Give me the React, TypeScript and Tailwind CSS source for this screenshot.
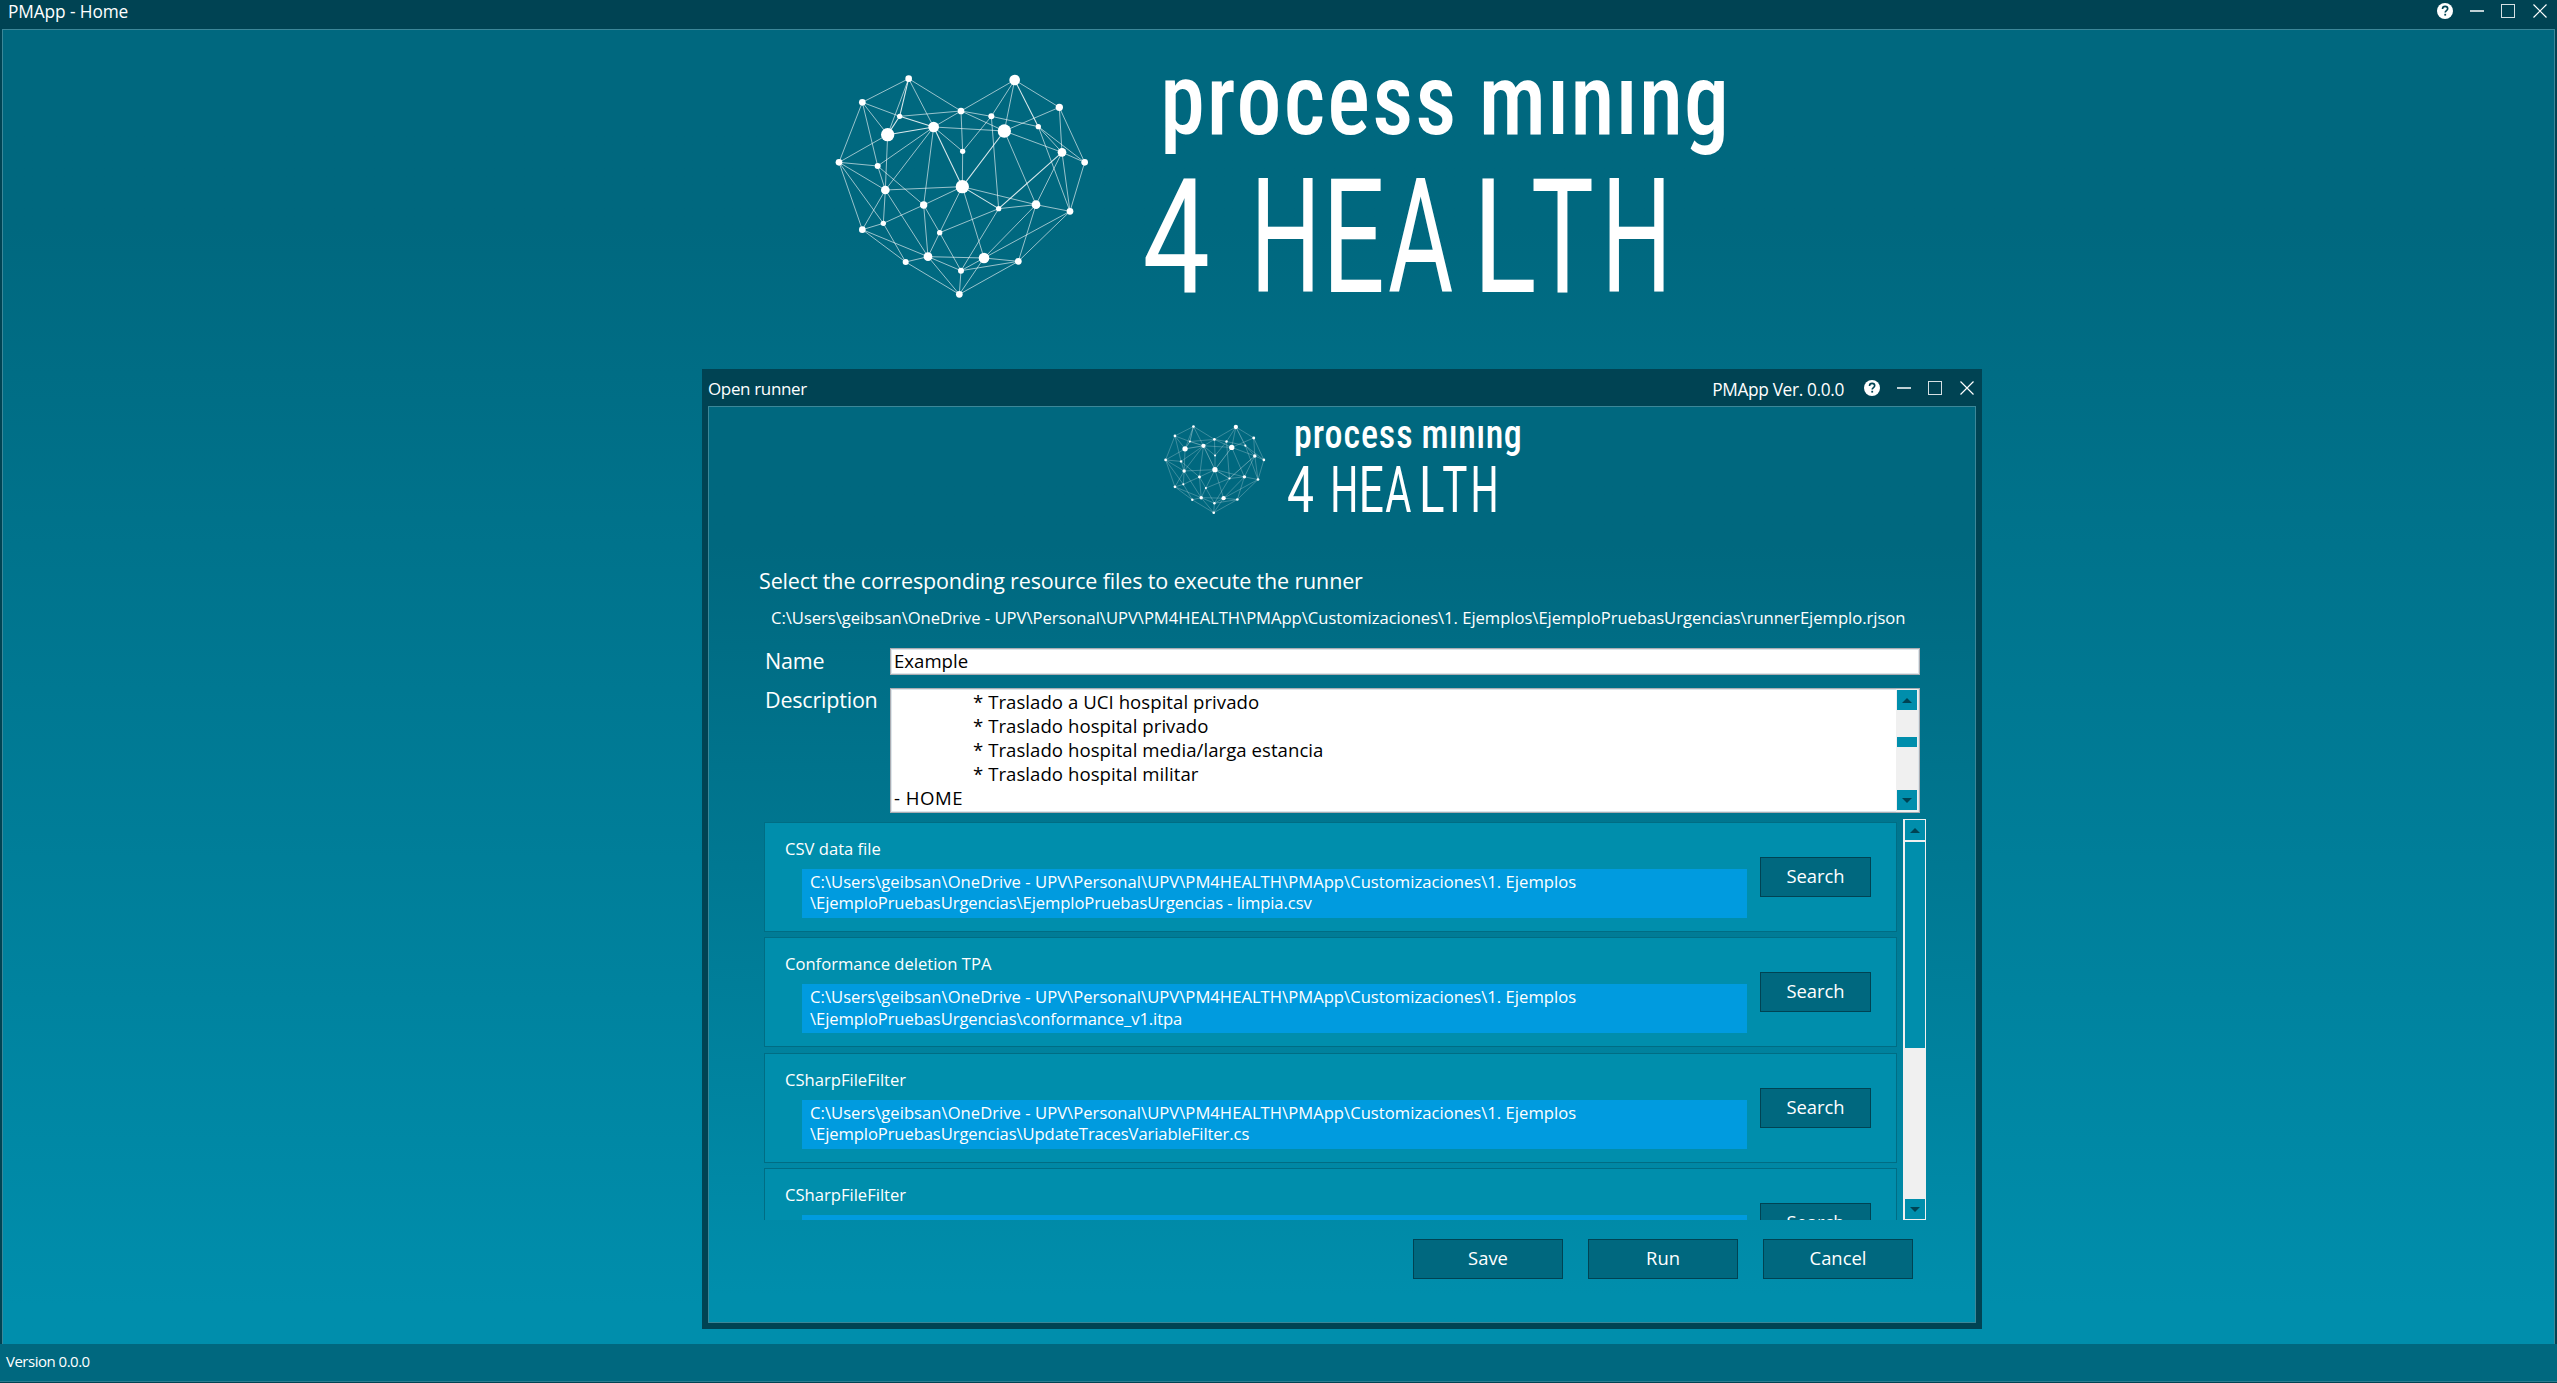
const NODES: Record<string, [number, number, number]> = {
  A: [266, 56, 10], B: [584, 60, 16], C: [127, 127, 10], D: [239, 169, 8], E: [423, 153, 10],
  F: [514, 169, 9], G: [718, 142, 11], H: [655, 200, 8], I: [341, 201, 16], J: [203, 224, 20],
  K: [553, 213, 20], L: [428, 274, 8], M: [726, 277, 13], N: [794, 307, 10], O: [57, 307, 10],
  P: [173, 318, 9], Q: [196, 390, 13], R: [427, 380, 20], S: [311, 435, 11], T: [536, 446, 8],
  U: [648, 434, 13], V: [750, 454, 10], W: [190, 490, 8], X: [127, 509, 10], Y: [359, 518, 8],
  Z: [324, 590, 13], a: [492, 594, 16], b: [257, 606, 9], c: [595, 604, 10], d: [423, 632, 9],
  e: [418, 703, 10],
}

const THIN =
  'AC AE AI AJ CD CJ CP CO DE EI EB EL EF EK BF BK BG FL FH FT GK GM GN HN HV HM KI KM KU MN MV MU NV JO JQ OP PI PQ PS OQ OW OX IQ IS IL LR QR QX QW QZ RS RY Ra RU SW SY SZ WX Wb TU TY Td UV Ua Uc Va Vc XZ Xb Zb ZY Za Zd Ze Yd ac ad ae cd ce de be'
const BOLD = 'AD DJ DI JI BH IR KR MT RT'

function Edges({ list, className }: { list: string; className: string }) {
  return (
    <g className={className}>
      {list.split(' ').map((e) => {
        const [x1, y1] = NODES[e[0]]
        const [x2, y2] = NODES[e[1]]
        return <line key={e} x1={x1} y1={y1} x2={x2} y2={y2} />
      })}
    </g>
  )
}

const LETTERS: [string, number, number][] = [
  ['4', 322.4, 67.4],
  ['H', 430.4, 70.3],
  ['E', 501.9, 62.9],
  ['A', 568.1, 65.2],
  ['L', 652.7, 63.8],
  ['T', 710.9, 62.8],
  ['H', 781.4, 70.3],
]

function Logo({ className }: { className: string }) {
  return (
    <svg viewBox="0 0 910 240" className={`block shrink-0 overflow-visible fill-white ${className}`}>
      <g transform="scale(0.33333)">
        <Edges list={THIN} className="stroke-white/60 [stroke-width:3]" />
        <Edges list={BOLD} className="stroke-white/85 [stroke-width:3.2]" />
        {Object.entries(NODES).map(([k, [x, y, r]]) => (
          <circle key={k} cx={x} cy={y} r={r} />
        ))}
      </g>
      <g transform="scale(0.9 1)" className="font-['Roboto',sans-serif] text-[100px] font-medium [font-stretch:75%]">
        <text x="378" y="73.5" textLength="329">process</text>
        <text x="732" y="73.5" textLength="278">mınıng</text>
      </g>
      <g className="font-['Roboto',sans-serif] text-[160px]">
        {LETTERS.map(([t, x, w], i) => (
          <text key={i} x={x} y="231.7" textLength={w} lengthAdjust="spacingAndGlyphs">
            {t}
          </text>
        ))}
      </g>
    </svg>
  )
}

function WindowButtons() {
  return (
    <svg width="112" height="20" viewBox="0 0 112 20" className="block shrink-0">
      <circle cx="9" cy="10" r="8" fill="#fff" />
      <path d="M6.5 8c0-1.6 1-2.6 2.6-2.6s2.6 1 2.6 2.3c0 1.8-2.5 1.9-2.5 3.7" fill="none" stroke="#004353" strokeWidth="1.6" />
      <rect x="8.3" y="12.8" width="1.8" height="1.8" fill="#004353" />
      <rect x="34" y="9" width="14" height="2" fill="#bfd0d4" />
      <rect x="65.5" y="3.5" width="13" height="13" fill="none" stroke="#d5e0e3" />
      <path d="M97.5 3.5l13 13M110.500 3.5l-13 13" stroke="#fff" strokeWidth="1.2" />
    </svg>
  )
}

function Arrow({ down }: { down?: boolean }) {
  return (
    <div className="flex h-5 w-5 shrink-0 items-center justify-center bg-[#008eac]">
      <svg width="10" height="5" viewBox="0 0 10 5" className={down ? 'rotate-180' : ''}>
        <path d="M5 0l5 5H0z" fill="#004353" />
      </svg>
    </div>
  )
}

const BASE = 'C:\\Users\\geibsan\\OneDrive - UPV\\Personal\\UPV\\PM4HEALTH\\PMApp\\Customizaciones\\1. Ejemplos'

const FILES: [string, string][] = [
  ['CSV data file', '\\EjemploPruebasUrgencias\\EjemploPruebasUrgencias - limpia.csv'],
  ['Conformance deletion TPA', '\\EjemploPruebasUrgencias\\conformance_v1.itpa'],
  ['CSharpFileFilter', '\\EjemploPruebasUrgencias\\UpdateTracesVariableFilter.cs'],
  ['CSharpFileFilter', ''],
]

const LINES = [
  '* Traslado a UCI hospital privado',
  '* Traslado hospital privado',
  '* Traslado hospital media/larga estancia',
  '* Traslado hospital militar',
]

function FileCard({ title, file }: { title: string; file: string }) {
  return (
    <div className="flex h-[110px] shrink-0 items-start border border-[#006d84] bg-[#008eac]">
      <div className="ml-[37px] w-[945px] pt-[15px]">
        <div className="-ml-[17px] text-[16.6px] leading-[22px]">{title}</div>
        <div className="mt-[9px] h-[49px] bg-[#009bdf] pt-[2px] pl-2 text-[16.6px] leading-[21.3px]">
          <div className="tracking-[0.035px]">{BASE}</div>
          <div className="tracking-[-0.09px]">{file}</div>
        </div>
      </div>
      <button className="mt-[34px] ml-[13px] h-10 w-[111px] border border-[#004353] bg-[#00687f] pb-[2px] text-[18.4px] leading-none">
        Search
      </button>
    </div>
  )
}

function Dialog() {
  return (
    <section className="absolute top-[369px] left-[702px] flex h-[960px] w-[1280px] flex-col bg-[#004353] px-[6px] pb-[6px]">
      <header className="flex h-[37px] shrink-0 items-start">
        <span className="pt-[7px] text-[17px] leading-[26px] tracking-[-0.35px]">Open runner</span>
        <span className="mr-[19px] ml-auto pt-2 text-[17.3px] leading-[26px] tracking-[-0.35px]">PMApp Ver. 0.0.0</span>
        <div className="mr-px pt-[9px]">
          <WindowButtons />
        </div>
      </header>
      <div className="flex flex-1 flex-col border border-[#3c8798] bg-linear-to-b from-[#00687f] from-15% to-[#008eac] to-97%">
        <Logo className="mt-3 ml-[449px] h-24 w-[364px]" />
        <h1 className="mt-[51px] ml-[50px] text-[21.5px] leading-[30px] tracking-[-0.15px]">
          Select the corresponding resource files to execute the runner
        </h1>
        <p className="mt-[9px] ml-[62px] text-[16.6px] leading-[26px] tracking-[-0.02px]">
          {BASE}\EjemploPruebasUrgencias\runnerEjemplo.rjson
        </p>
        <div className="mt-[17px] ml-[56px] flex h-[27px]">
          <label className="w-[125px] text-[21.5px] leading-[25px] tracking-[-0.2px]">Name</label>
          <div className="w-[1030px] border border-[#abadb3] bg-white pl-[3px] text-[18.6px] leading-6 text-black shadow-[inset_0_0_0_1px_#dde5ea]">
            Example
          </div>
        </div>
        <div className="mt-[13px] ml-[56px] flex h-[125px]">
          <label className="w-[125px] text-[21.5px] leading-[23px] tracking-[-0.2px]">Description</label>
          <div className="flex w-[1030px] justify-between border border-[#abadb3] bg-white pr-px text-[18.6px] leading-[24.1px] text-black shadow-[inset_0_0_0_1px_#dde5ea]">
            <div className="pt-[0.6px] pl-[3px]">
              {LINES.map((l) => (
                <div key={l} className="pl-[79px] tracking-[0.04px]">{l}</div>
              ))}
              <div className="tracking-[0.5px]">- HOME</div>
            </div>
            <div className="flex w-[22px] flex-col items-center bg-[#f0f0f0] pt-px pb-[2px]">
              <Arrow />
              <div className="mt-[27px] mb-auto h-[10px] w-5 bg-[#008eac]" />
              <Arrow down />
            </div>
          </div>
        </div>
        <div className="mt-[6px] ml-[55px] flex h-[401px]">
          <div className="flex w-[1133px] flex-col gap-[5.4px] overflow-hidden pt-[3px]">
            {FILES.map(([t, f], i) => (
              <FileCard key={i} title={t} file={f} />
            ))}
          </div>
          <div className="ml-[6px] flex w-[23px] flex-col bg-[#f0f0f0] py-px pr-px pl-[2px]">
            <Arrow />
            <div className="mt-[2px] mb-auto h-[206px] w-5 bg-[#008eac]" />
            <Arrow down />
          </div>
        </div>
        <div className="mt-[19px] ml-[704px] flex gap-[25px]">
          {['Save', 'Run', 'Cancel'].map((t) => (
            <button key={t} className="h-10 w-[150px] border border-[#004353] bg-[#00687f] pb-[2px] text-[18.4px] leading-none">
              {t}
            </button>
          ))}
        </div>
      </div>
    </section>
  )
}

export default function App() {
  return (
    <div className="relative flex h-[1383px] w-[2557px] flex-col overflow-hidden bg-[#004353] font-['Open_Sans',sans-serif] whitespace-nowrap text-white">
      <header className="flex h-[29px] shrink-0 items-start">
        <span className="ml-[8px] text-[17.3px] leading-[24px] tracking-[-0.1px]">PMApp - Home</span>
        <div className="mr-[9px] ml-auto pt-px">
          <WindowButtons />
        </div>
      </header>
      <main className="mx-[2px] flex flex-1 items-start border border-b-0 border-[#3c8798] bg-linear-to-b from-[#00687f] from-15% to-[#008eac] to-97%">
        <Logo className="mt-[30px] ml-[817px] h-[240px] w-[910px]" />
      </main>
      <footer className="mb-px h-[38px] shrink-0 border-b border-[#2b7d90] bg-[#00687f] pl-[6px] text-[15px] leading-[34px] tracking-[-0.5px]">
        Version 0.0.0
      </footer>
      <Dialog />
    </div>
  )
}
